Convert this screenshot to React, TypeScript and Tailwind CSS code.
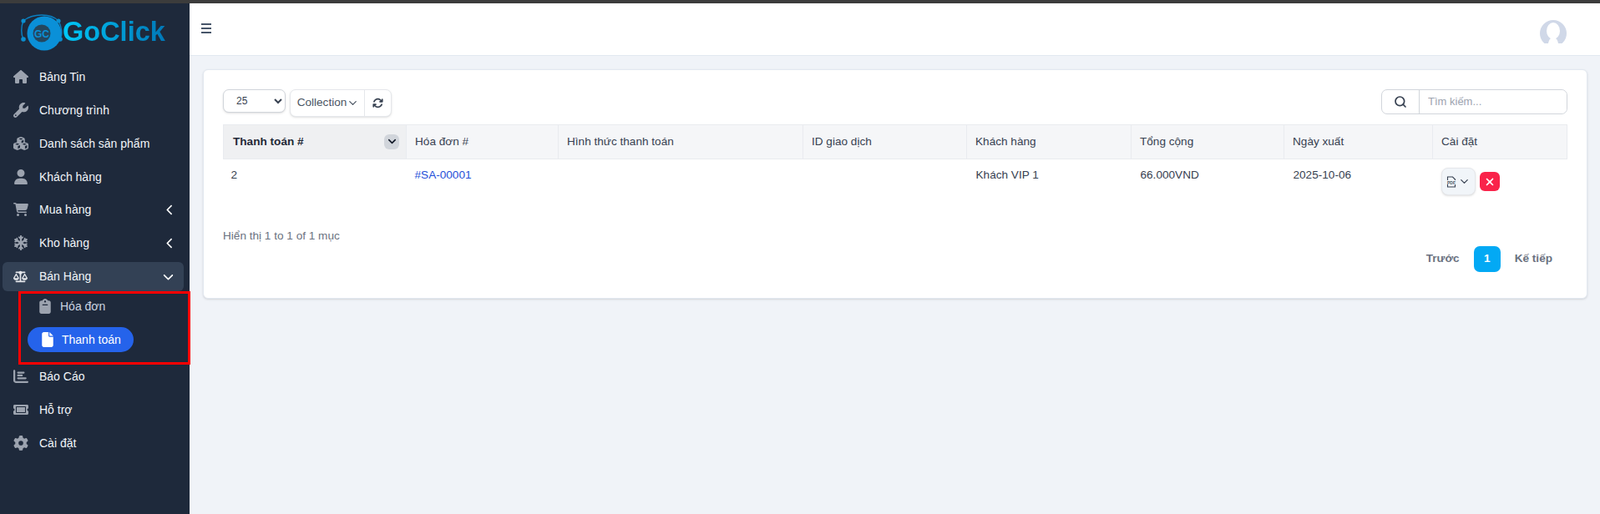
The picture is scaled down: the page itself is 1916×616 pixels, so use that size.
import {
  FaArrowsRotate,
  FaCartShopping,
  FaChartBar,
  FaChevronDown,
  FaChevronLeft,
  FaClipboard,
  FaCubes,
  FaFile,
  FaGear,
  FaHouse,
  FaScaleBalanced,
  FaSnowflake,
  FaUser,
  FaWrench,
  FaXmark,
} from "react-icons/fa6";
import { FaTicketAlt } from "react-icons/fa";
import { LuChevronDown, LuSearch } from "react-icons/lu";

const topItems = [
  { label: "Bảng Tin", icon: FaHouse },
  { label: "Chương trình", icon: FaWrench },
  { label: "Danh sách sản phẩm", icon: FaCubes },
  { label: "Khách hàng", icon: FaUser },
];

const stockItems = [
  { label: "Mua hàng", icon: FaCartShopping, arrow: true },
  { label: "Kho hàng", icon: FaSnowflake, arrow: true },
];

const bottomItems = [
  { label: "Báo Cáo", icon: FaChartBar },
  { label: "Hỗ trợ", icon: FaTicketAlt },
  { label: "Cài đặt", icon: FaGear },
];

const columns = [
  { label: "Hóa đơn #", width: "w-[182px]" },
  { label: "Hình thức thanh toán", width: "w-[293px]" },
  { label: "ID giao dịch", width: "w-[196px]" },
  { label: "Khách hàng", width: "w-[197px]" },
  { label: "Tổng cộng", width: "w-[183px]" },
  { label: "Ngày xuất", width: "w-[178px]" },
  { label: "Cài đặt", width: "w-[161px]" },
];

function Logo() {
  return (
    <div className="flex h-[68px] items-center pl-[25px] pt-[1px]">
      <svg width="52" height="44" viewBox="0 0 52 44" className="shrink-0">
        <path d="M3 8 C9 3 18 1 25 1 C33 1 40 3 45 8" fill="none" stroke="#0a7fc0" strokeWidth="1.5" />
        <path d="M3 8 C0 15 0 24 3 30" fill="none" stroke="#0a7fc0" strokeWidth="1.5" />
        <path d="M45 8 C49 15 50 24 47 30" fill="none" stroke="#0a7fc0" strokeWidth="1.5" />
        <circle cx="3" cy="8" r="2.6" fill="#0a8fd0" />
        <circle cx="45" cy="8" r="2.6" fill="#0a8fd0" />
        <circle cx="3" cy="30" r="2.8" fill="#0a8fd0" />
        <circle cx="47" cy="30" r="2.8" fill="#0a8fd0" />
        <circle cx="28" cy="23" r="20.5" fill="#0a90d8" />
        <circle cx="25" cy="23" r="10.5" fill="#24475f" />
        <text x="25" y="27.5" textAnchor="middle" fontSize="12" fontWeight="700" fontFamily="Liberation Sans" fill="#0a90d8">
          GC
        </text>
      </svg>
      <span className="-ml-[2px] bg-gradient-to-r from-[#00c8f8] to-[#0078b8] bg-clip-text text-[32.5px] font-bold leading-none text-transparent">
        GoClick
      </span>
    </div>
  );
}

function NavRow({ label, icon: Icon, arrow }: { label: string; icon: React.ComponentType<{ className?: string }>; arrow?: boolean }) {
  return (
    <div className="flex h-10 items-center pl-4 pr-[17px] text-[14px] text-[#f1f5f9]">
      <span className="flex w-[31px] shrink-0">
        <Icon className="h-[18px] w-auto text-[#9ca3af]" />
      </span>
      <span className="flex-1">{label}</span>
      {arrow && <FaChevronLeft className="h-[13px] w-auto text-white" />}
    </div>
  );
}

function Sidebar() {
  return (
    <aside className="w-[227px] shrink-0 bg-[#1e293b]">
      <Logo />
      <nav>
        {topItems.map((item) => (
          <NavRow key={item.label} {...item} />
        ))}
        <div className="-mt-[1px]">
          {stockItems.map((item) => (
            <NavRow key={item.label} {...item} />
          ))}
        </div>
        <div className="ml-[3px] mt-[3px] flex h-[35px] w-[217px] items-center rounded-[6px] bg-[#334155] pl-[13px] pr-[12px] text-[14px] text-[#f1f5f9]">
          <span className="flex w-[31px] shrink-0">
            <FaScaleBalanced className="h-[17px] w-auto text-[#e5e7eb]" />
          </span>
          <span className="flex-1">Bán Hàng</span>
          <FaChevronDown className="h-[13px] w-auto text-white" />
        </div>
        <div className="flex h-[36px] items-center pl-[45px] text-[14px] text-[#cbd5e1]">
          <span className="flex w-[27px] shrink-0">
            <FaClipboard className="h-[18px] w-auto text-[#9ca3af]" />
          </span>
          Hóa đơn
        </div>
        <div className="ml-[33px] mt-[7px] flex h-[30px] w-[127px] items-center rounded-full bg-[#2563eb] pl-[15px] text-[14px] text-white">
          <span className="flex w-[26px] shrink-0">
            <FaFile className="h-[18px] w-auto" />
          </span>
          Thanh toán
        </div>
        <div className="h-[9px]" />
        {bottomItems.map((item) => (
          <NavRow key={item.label} {...item} />
        ))}
      </nav>
    </aside>
  );
}

function Toolbar() {
  return (
    <div className="flex items-start justify-between">
      <div className="flex items-start gap-[5px]">
        <select
          defaultValue="25"
          className="h-[28px] w-[75px] rounded-[7px] border border-[#d1d5db] bg-white pl-[11px] text-[12px] text-[#374151] shadow-sm"
        >
          <option value="25">25</option>
          <option value="50">50</option>
          <option value="100">100</option>
        </select>
        <div className="flex h-[33px] w-[122px] rounded-[7px] border border-[#e5e7eb] bg-white text-[13.6px] text-[#4b5563] shadow-sm">
          <div className="flex w-[89px] items-center justify-center border-r border-[#e5e7eb] pl-[2px]">
            Collection
            <LuChevronDown className="h-[15px] w-[15px]" />
          </div>
          <div className="flex flex-1 items-center justify-center">
            <FaArrowsRotate className="h-[13px] w-[13px] text-[#374151]" />
          </div>
        </div>
      </div>
      <div className="flex h-[30px] w-[223px] rounded-[7px] border border-[#d1d5db] bg-white">
        <div className="flex w-[45px] shrink-0 items-center justify-center border-r border-[#d1d5db]">
          <LuSearch className="h-[16px] w-[16px] text-[#374151]" strokeWidth={2.6} />
        </div>
        <input
          placeholder="Tìm kiếm..."
          className="min-w-0 flex-1 rounded-r-[7px] bg-white pl-[10px] text-[13px] outline-none placeholder:text-[#9ca3af]"
        />
      </div>
    </div>
  );
}

function PaymentsTable() {
  return (
    <table className="mt-[9px] w-[1609px] table-fixed border-collapse text-[13.6px] text-[#374151]">
      <thead>
        <tr className="h-[41px] border border-[#e9ebef] bg-[#f5f6f8]">
          <th className="w-[219px] bg-[#eff0f2] pl-[11px] pr-[8px] text-left font-bold text-[#1f2937]">
            <div className="flex items-center justify-between">
              Thanh toán #
              <span className="flex h-[18px] w-[18px] items-center justify-center rounded-[6px] bg-[#d1d5db]">
                <LuChevronDown className="h-[15px] w-[15px] text-[#111827]" strokeWidth={2.5} />
              </span>
            </div>
          </th>
          {columns.map((col) => (
            <th key={col.label} className={`${col.width} border-l border-[#e9ebef] pl-[10px] text-left font-normal`}>
              {col.label}
            </th>
          ))}
        </tr>
      </thead>
      <tbody>
        <tr className="h-[64px] align-top">
          <td className="pl-[9px] pt-[9px]">2</td>
          <td className="pl-[10px] pt-[9px] text-[#2550d8]">#SA-00001</td>
          <td />
          <td />
          <td className="pl-[11px] pt-[9px]">Khách VIP 1</td>
          <td className="pl-[11px] pt-[9px]">66.000VND</td>
          <td className="pl-[11px] pt-[9px]">2025-10-06</td>
          <td className="pl-[10px] pt-[10px]">
            <div className="flex items-center gap-[5px]">
              <div className="flex h-[33px] w-[41px] items-center justify-center gap-[2px] rounded-[8px] border border-[#e5e7eb] bg-[#f1f5f9] shadow-sm">
                <svg width="12" height="14" viewBox="0 0 12 14" fill="none" stroke="#374151" strokeWidth="1.1">
                  <path d="M1.5 5V1h6l3 3v1M1.5 10v3h9v-3" />
                  <text x="6" y="9.6" textAnchor="middle" fontSize="5" fontWeight="700" fontFamily="Liberation Sans" fill="#4b5563" stroke="none">
                    PDF
                  </text>
                </svg>
                <LuChevronDown className="h-[15px] w-[15px] text-[#374151]" />
              </div>
              <div className="flex h-[23px] w-[24px] items-center justify-center rounded-[6px] bg-[#f9234a]">
                <FaXmark className="h-[14px] w-[14px] text-white" />
              </div>
            </div>
          </td>
        </tr>
      </tbody>
    </table>
  );
}

function Pagination() {
  return (
    <div className="mt-[2px] flex items-center justify-end pr-[18px] text-[13.6px] font-bold text-[#6b7280]">
      <span>Trước</span>
      <span className="mx-[17px] flex h-[31px] w-[32px] items-center justify-center rounded-[7px] bg-[#03a9f4] text-white">1</span>
      <span>Kế tiếp</span>
    </div>
  );
}

export default function App() {
  return (
    <div className="relative flex h-[616px] flex-col overflow-hidden bg-[#f0f3f8] font-['Liberation_Sans',Arial,sans-serif]">
      <div className="h-[4px] shrink-0 bg-[#3c3c3c]" />
      <div className="flex min-h-0 flex-1">
        <Sidebar />
        <main className="min-w-0 flex-1">
          <header className="flex h-[63px] items-center justify-between border-b border-[#e2e8f0] bg-white pl-[14px] pr-[40px]">
            <div className="flex w-[12px] flex-col gap-[3px] pb-[2px]">
              <span className="h-[2px] bg-[#475569]" />
              <span className="h-[2px] bg-[#475569]" />
              <span className="h-[2px] bg-[#475569]" />
            </div>
            <svg width="32" height="28" viewBox="0 0 32 28" className="mt-[6px]">
              <circle cx="16" cy="16" r="16" fill="#d0d8e8" />
              <ellipse cx="16" cy="13" rx="8" ry="10" fill="#fff" />
              <path d="M10 28 C11 23 13 21 16 21 C19 21 21 23 22 28 Z" fill="#fff" />
            </svg>
          </header>
          <section className="ml-[16px] mr-[15px] mt-[16px] h-[275px] rounded-[6px] border border-[#e2e8f0] bg-white pl-[23px] pr-[23px] pt-[23px] shadow-sm">
            <Toolbar />
            <PaymentsTable />
            <div className="mt-[18px] text-[13.6px] text-[#6b7280]">Hiển thị 1 to 1 of 1 mục</div>
            <Pagination />
          </section>
        </main>
      </div>
      {/* annotation box from the screenshot */}
      <div className="absolute left-[22px] top-[349px] h-[88px] w-[206px] border-[3px] border-[#ff0000]" />
    </div>
  );
}
